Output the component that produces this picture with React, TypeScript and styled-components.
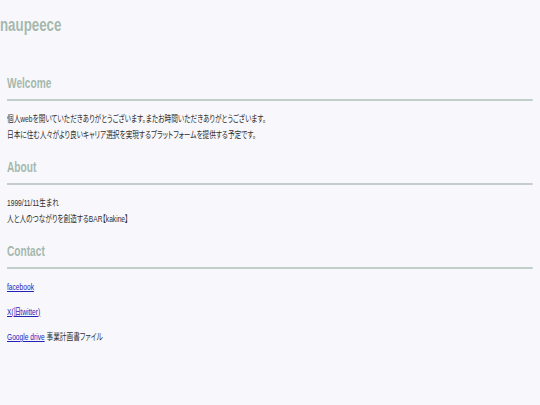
import React from "react";
import styled, { createGlobalStyle } from "styled-components";

const SCALE_X = 0.7;

const GlobalStyle = createGlobalStyle`
  html, body {
    margin: 0;
    padding: 0;
    background: #f8f8fc;
    overflow: hidden;
  }
  body {
    font-family: "Liberation Sans", "Noto Sans CJK JP", Arial, sans-serif;
    color: #333333;
  }
`;

const Page = styled.div`
  width: ${540 / SCALE_X}px;
  min-height: 405px;
  transform: scaleX(${SCALE_X});
  transform-origin: left top;
  display: flex;
  flex-direction: column;
`;

const SiteTitle = styled.h1`
  margin: 0;
  padding: 13px 0 0 0;
  font-size: 19px;
  line-height: 24px;
  font-weight: 700;
  color: #a6b8ae;
`;

const Main = styled.main`
  display: flex;
  flex-direction: column;
  gap: 14px;
  padding: 36px 10px 0 10px;
`;

const Section = styled.section`
  display: flex;
  flex-direction: column;
`;

const Heading = styled.h2`
  margin: 0;
  padding-bottom: 6px;
  border-bottom: 2px solid #c4cecb;
  font-size: 14.5px;
  line-height: 20px;
  font-weight: 700;
  color: #a6b8ae;
`;

const Body = styled.div<{ $gap?: number }>`
  display: flex;
  flex-direction: column;
  gap: ${(p) => p.$gap ?? 0}px;
  padding-top: 10px;
`;

const Line = styled.p`
  margin: 0;
  font-size: 9.5px;
  line-height: 16px;
  font-family: "Liberation Sans", "Noto Sans CJK JP", sans-serif;
  font-feature-settings: "palt";
  color: #2e2e2e;
`;

const Link = styled.a`
  color: #2323b8;
  text-decoration: underline;
`;

export default function App() {
  return (
    <>
      <GlobalStyle />
      <Page>
        <SiteTitle>naupeece</SiteTitle>
        <Main>
          <Section>
            <Heading>Welcome</Heading>
            <Body>
              <Line>
                個人webを開いていただきありがとうございます。またお時間いただきありがとうございます。
              </Line>
              <Line>
                日本に住む人々がより良いキャリア選択を実現するプラットフォームを提供する予定です。
              </Line>
            </Body>
          </Section>
          <Section>
            <Heading>About</Heading>
            <Body>
              <Line>1999/11/11生まれ</Line>
              <Line>人と人のつながりを創造するBAR【kakine】</Line>
            </Body>
          </Section>
          <Section>
            <Heading>Contact</Heading>
            <Body $gap={9}>
              <Line>
                <Link href="#">facebook</Link>
              </Line>
              <Line>
                <Link href="#">X(旧twitter)</Link>
              </Line>
              <Line>
                <Link href="#">Google drive</Link> 事業計画書ファイル
              </Line>
            </Body>
          </Section>
        </Main>
      </Page>
    </>
  );
}
